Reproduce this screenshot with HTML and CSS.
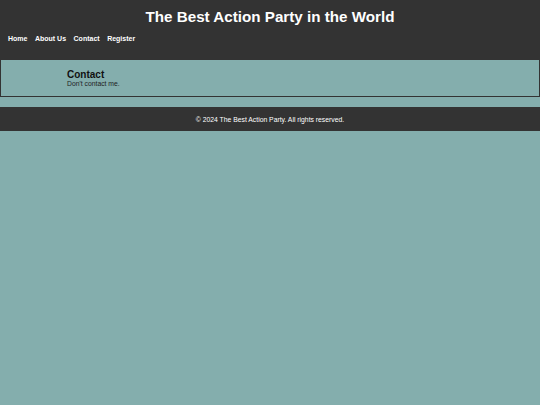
FILE: index.html
```html
<!DOCTYPE html>
<html lang="en">
<head>
  <meta charset="UTF-8" />
  <meta name="viewport" content="width=device-width, initial-scale=1.0"/>
  <title>Contact</title>
  <link rel="stylesheet" href="styles.css">
</head>
<body>
  <header class="site-header">
    <h1 class="site-title">The Best Action Party in the World</h1>
    <nav class="site-nav">
      <a href="#">Home</a>
      <a href="#">About Us</a>
      <a href="#">Contact</a>
      <a href="#">Register</a>
    </nav>
  </header>

  <section class="content">
    <h2>Contact</h2>
    <p>Don't contact me.</p>
  </section>

  <footer class="site-footer">
    <p>&copy; 2024 The Best Action Party. All rights reserved.</p>
  </footer>
</body>
</html>
```

FILE: styles.css
```css
body {
  margin: 0;
  font-family: "Liberation Sans", Arial, sans-serif;
  background: #84aead;
}
.site-header {
  background: #333;
  color: white;
  height: 59px;
  padding: 8px 8px 0;
  box-sizing: border-box;
}
.site-title {
  margin: 0;
  font-size: 15.2px;
  text-align: center;
}
.site-nav {
  display: flex;
  gap: 7.5px;
  margin-top: 10px;
}
.site-nav a {
  color: white;
  text-decoration: none;
  font-size: 7px;
  font-weight: bold;
}
.content {
  border: 1px solid #333;
  padding: 9px 66px 9px;
}
.content h2 {
  margin: 0;
  font-size: 10px;
  color: #111;
}
.content p {
  margin: 0;
  font-size: 6.8px;
  color: #222;
}
.site-footer {
  margin-top: 10px;
  background: #333;
  color: white;
  height: 24px;
  display: flex;
  align-items: center;
  justify-content: center;
}
.site-footer p {
  margin: 0;
  font-size: 6.8px;
}
```
